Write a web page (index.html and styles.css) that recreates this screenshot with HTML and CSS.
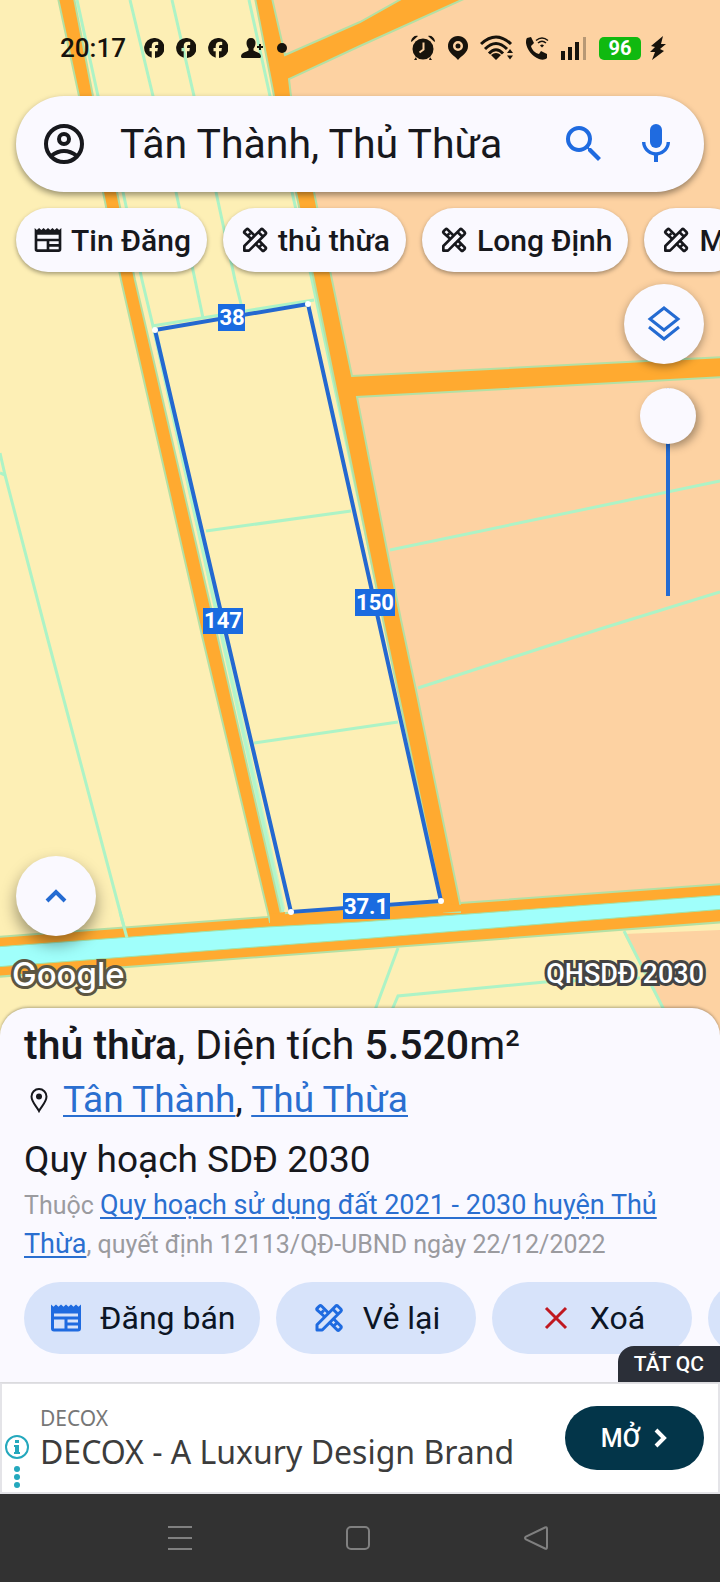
FILE: index.html
```html
<!DOCTYPE html>
<html lang="vi">

<head>
    <meta charset="UTF-8">
    <meta name="viewport" content="width=device-width, initial-scale=1.0">
    <title>Quy hoạch SDĐ 2030</title>
    <link rel="stylesheet" href="styles.css">
</head>

<body>
    <!-- shared icons -->
    <svg class="sprite" aria-hidden="true">
        <symbol id="i-news" viewBox="0 0 24 24">
            <path fill-rule="evenodd" d="M2 3l1.67 1.5L5.33 3 7 4.5 8.67 3l1.66 1.5L12 3l1.67 1.5L15.33 3 17 4.5 18.67 3l1.66 1.5L22 3v16a2 2 0 0 1-2 2H4a2 2 0 0 1-2-2zM4 13v6h7v-6zM13 17v2h7v-2zM13 13v2h7v-2zM4 9v2h16V9z" />
        </symbol>
        <symbol id="i-news-line" viewBox="0 0 24 24">
            <path fill-rule="evenodd" d="M2 3l1.67 1.5L5.33 3 7 4.5 8.67 3l1.66 1.5L12 3l1.67 1.5L15.33 3 17 4.5 18.67 3l1.66 1.5L22 3v16a2 2 0 0 1-2 2H4a2 2 0 0 1-2-2zM4 13v6h7v-6zM13 17v2h7v-2zM13 13v2h7v-2zM4 8v3h16V8z" />
        </symbol>
        <symbol id="i-design" viewBox="0 0 24 24">
            <g fill="none" stroke="currentColor" stroke-width="2" stroke-linejoin="round">
                <path d="M9.500 11.500L4.200 6.800a1 1 0 0 1 0-1.400L5.600 4a1 1 0 0 1 1.400 0l5 5M14.500 12l5.500 5.500a1 1 0 0 1 0 1.200L18.700 20a1 1 0 0 1-1.200 0L12 14.500M7 8.500L8.500 7M15.500 17l1.500-1.500" />
                <path d="M4 20v-3.500L16.500 4a1 1 0 0 1 1.300 0L20 6.200a1 1 0 0 1 0 1.300L7.500 20zM14.500 6l3.500 3.500" />
            </g>
        </symbol>
        <symbol id="i-fb" viewBox="0 0 20 20">
            <path d="M10 0a10 10 0 0 0-2.300 19.700v-6.400H5.500V10h2.200V8.400c0-3.300 1.500-4.700 4.600-4.700.6 0 1.500.1 1.900.2v3h-1.300c-1.400 0-1.900.5-1.900 1.800V10h2.900l-.5 3.300H11V20A10 10 0 0 0 10 0z" />
        </symbol>
    </svg>

    <main class="map">
        <svg class="map-canvas" viewBox="0 0 720 1036" preserveAspectRatio="xMidYMin slice" aria-hidden="true">
            <rect width="720" height="1040" fill="#fdefb5" />
            <!-- orange zone -->
            <path fill="#fdd2a2" d="M265 0H720V930L624 934 678 1040H720V890L455 910 330 290z" />
            <!-- parcel lines -->
            <g class="parcels">
                <path d="M0 453L5 475 48 640 127 938M0 473l5 2" />
                <path d="M77 0L98 96 123 192 142 280 153 326 283 912" />
                <path d="M130 0L153 96 176 192 194 275 203 318" />
                <path d="M172 0L194 96 216 192 235 280 242 308" />
                <path d="M249 0L270 96 292 192 312 280 445 908" />
                <path d="M152 326L314 300M206 531L351 511M254 743L398 722" />
                <path d="M390 550L720 481M418 688L600 629 720 592" />
                <path d="M398 948L375 1010M392 1010L398 996 545 982 640 978M624 931L664 1010" />
            </g>
            <path fill="none" stroke="#b3f7cf" stroke-width="5" opacity=".7" d="M156 335L283 910" />
            <!-- roads -->
            <g class="roads">
                <path d="M-5 937L267 917 286 913 443 902 460 903 725 884V922L-5 977z" />
                <path d="M58 -2H74L93 96 117 192 135 280 217 634 283 922H270L203 640 121 280 103 192 79 96z" />
                <path d="M255 -2H272L285 55 360 22 403 -2H466L360 46 289 79 291 96 314 192 332 280 352 376 725 357V377L357 397 387 550 401 620 416 690 460 903 460 912H444L383 620 314 280 296 192 274 96z" />
            </g>
            <path class="road-fill" d="M270 914L285 912 284 924 270 925zM440 903l23 2 0 6-23 2z" />
            <path fill="#a0fffb" stroke="#9fe3ab" stroke-width="1" d="M-5 947L267 927 360 922 725 895V909L360 939 -5 967z" />
            <path class="parcels" d="M120 912L127 938" />
            <!-- selected plot -->
            <path class="plot" d="M155 330L308 304 441 901 291 912z" />
            <g fill="#fff">
                <circle cx="155" cy="330" r="3" />
                <circle cx="308" cy="304" r="3" />
                <circle cx="441" cy="901" r="3" />
                <circle cx="291" cy="912" r="3" />
            </g>
            <g class="lengths">
                <rect x="218" y="304" width="27" height="27" /><text x="232" y="325">38</text>
                <rect x="203" y="608" width="40" height="26" /><text x="223" y="628">147</text>
                <rect x="355" y="589" width="40" height="27" /><text x="375" y="610">150</text>
                <rect x="343" y="893" width="47" height="26" /><text x="366" y="914">37.1</text>
            </g>
        </svg>

        <header class="status">
            <span class="clock">20:17</span>
            <svg width="20" height="20"><use href="#i-fb" /></svg>
            <svg width="20" height="20"><use href="#i-fb" /></svg>
            <svg width="20" height="20"><use href="#i-fb" /></svg>
            <svg width="24" height="20" viewBox="0 0 24 20">
                <path d="M11 0c3 0 4.500 2 4.500 5 0 2.500-1 4.500-2 5.500v2c2 1.500 7.500 2 7.500 6 0 1-1 1.500-2 1.500H3c-1 0-2-.5-2-1.500 0-4 5.500-4.500 7.500-6v-2c-1-1-2-3-2-5.500 0-3 1.500-5 4.500-5z" />
                <path d="M20 6v6M17 9h6" fill="none" stroke="currentColor" stroke-width="2" />
            </svg>
            <svg width="12" height="20"><circle cx="6" cy="10" r="5" /></svg>
            <div class="status-right">
                <svg width="26" height="26" viewBox="0 0 26 26">
                    <circle cx="13" cy="14" r="10.500" />
                    <path d="M1 6C2 2 5 0 8 1L1.500 7zM25 6c-1-4-4-6-7-5l6.500 6zM6 22l-2 3h3zM20 22l2 3h-3z" />
                    <path d="M13.500 7.500v7l-4 3" fill="none" stroke="#fdd2a2" stroke-width="2" />
                </svg>
                <svg width="22" height="26" viewBox="0 0 22 26">
                    <path fill-rule="evenodd" d="M11 1a10 10 0 0 1 10 10.500C21 18 14 21 11 25 8 21 1 18 1 11.500A10 10 0 0 1 11 1zm0 5a5 5 0 1 0 0 10 5 5 0 0 0 0-10z" />
                    <circle cx="11" cy="11" r="2.500" />
                </svg>
                <svg width="34" height="26" viewBox="0 0 34 26">
                    <g fill="none" stroke="currentColor" stroke-width="3">
                        <path d="M1 9Q16 -5 31 9M5 14Q16 3 27 14M9 18.500Q16 11 23 18.500" />
                    </g>
                    <path d="M11 20q5-4 10 0l-5 5zM27 18l3-4 3 4zM27 20.500h6l-3 4z" />
                </svg>
                <svg width="24" height="26" viewBox="0 0 24 26">
                    <path d="M2 3l4-1 3 6-3 3c1 4 4 7 8 8l2-3 6 3v4c-2 2-5 2-8 1C7 21 2 15 1 8c0-2 0-4 1-5z" />
                    <path d="M11 5.500q6-5 12 0M13 8q4-3.500 8 0" fill="none" stroke="currentColor" stroke-width="1.500" />
                    <path d="M15 10.500q2-2 4 0l-2 2z" />
                </svg>
                <svg width="28" height="26" viewBox="0 0 28 26">
                    <path d="M1 16h4v9H1zM8 12h4v13H8zM15 7h4v18h-4z" />
                    <path d="M23 2h3v23h-3z" opacity=".3" />
                </svg>
                <span class="battery">96</span>
                <svg width="16" height="24" viewBox="0 0 16 24">
                    <path d="M13 0L1 10l4 1-5 5 5 0-3 8 12-9-4-2 6-5-5 0z" />
                </svg>
            </div>
        </header>

        <form class="search">
            <button type="button" class="icon-btn" aria-label="Tài khoản">
                <svg width="48" height="48" viewBox="0 0 24 24">
                    <g fill="none" stroke="currentColor" stroke-width="2">
                        <circle cx="12" cy="12" r="9" />
                        <circle cx="12" cy="9.500" r="2.500" />
                        <path d="M5.500 18q6.500-5 13 0" />
                    </g>
                </svg>
            </button>
            <input class="search-input" type="text" aria-label="Tìm kiếm" value="Tân Thành, Thủ Thừa">
            <button type="submit" class="icon-btn blue" aria-label="Tìm">
                <svg width="48" height="48" viewBox="0 0 24 24">
                    <path d="M15.500 14h-.79l-.28-.27A6.470 6.470 0 0 0 16 9.500 6.500 6.500 0 1 0 9.500 16c1.610 0 3.090-.59 4.230-1.570l.27.28v.79l5 4.990L20.490 19l-4.990-5zm-6 0C7.010 14 5 11.990 5 9.500S7.010 5 9.500 5 14 7.010 14 9.500 11.990 14 9.500 14z" />
                </svg>
            </button>
            <button type="button" class="icon-btn blue" aria-label="Giọng nói">
                <svg width="48" height="48" viewBox="0 0 24 24">
                    <rect x="9" y="2" width="6" height="12" rx="3" />
                    <path d="M17.300 11c0 3-2.540 5.100-5.300 5.100S6.700 14 6.700 11H5c0 3.410 2.720 6.230 6 6.720V21h2v-3.280c3.280-.48 6-3.300 6-6.720h-1.700z" />
                </svg>
            </button>
        </form>

        <nav class="chips">
            <button class="chip"><svg width="32" height="32"><use href="#i-news-line" /></svg>Tin Đăng</button>
            <button class="chip"><svg width="32" height="32"><use href="#i-design" /></svg>thủ thừa</button>
            <button class="chip"><svg width="32" height="32"><use href="#i-design" /></svg>Long Định</button>
            <button class="chip"><svg width="32" height="32"><use href="#i-design" /></svg>M</button>
        </nav>

        <div class="tools">
            <button class="fab" aria-label="Lớp bản đồ">
                <svg width="36" height="36" viewBox="0 0 36 36">
                    <path d="M18 2L32 13 18 24 4 13zM3 21l15 12 15-12" fill="none" stroke="currentColor" stroke-width="3" />
                </svg>
            </button>
            <input class="opacity" type="range" min="0" max="100" value="0" aria-label="Độ mờ">
        </div>

        <div class="map-foot">
            <button class="fab fab-up" aria-label="Mở rộng">
                <svg width="24" height="24" viewBox="0 0 24 24">
                    <path d="M3 17l9-9 9 9" fill="none" stroke="currentColor" stroke-width="4" />
                </svg>
            </button>
            <div class="credits">
                <span class="google">Google</span>
                <span class="layer-name">QHSDĐ 2030</span>
            </div>
        </div>
    </main>

    <section class="sheet">
        <h1 class="title"><b>thủ thừa</b>, Diện tích <b>5.520</b>m²</h1>
        <p class="place">
            <svg width="30" height="30" viewBox="0 0 30 30">
                <path d="M15 4a7.500 7.500 0 0 1 7.500 7.500C22.500 17 17 22 15 26c-2-4-7.500-9-7.500-14.500A7.500 7.500 0 0 1 15 4z" fill="none" stroke="currentColor" stroke-width="2" />
                <circle cx="15" cy="11.500" r="3" />
            </svg>
            <span><a href="#">Tân Thành</a>, <a href="#">Thủ Thừa</a></span>
        </p>
        <h2 class="plan">Quy hoạch SDĐ 2030</h2>
        <p class="note">Thuộc <a href="#">Quy hoạch sử dụng đất 2021 - 2030 huyện Thủ Thừa</a>, quyết định 12113/QĐ-UBND ngày 22/12/2022</p>
        <div class="actions">
            <button class="action"><svg class="blue" width="36" height="36"><use href="#i-news" /></svg>Đăng bán</button>
            <button class="action"><svg class="blue" width="36" height="36"><use href="#i-design" /></svg>Vẻ lại</button>
            <button class="action">
                <svg class="red" width="36" height="36" viewBox="0 0 36 36">
                    <path d="M8 8l20 20M28 8L8 28" fill="none" stroke="currentColor" stroke-width="3" />
                </svg>Xoá
            </button>
            <button class="action" aria-label="Khác"></button>
        </div>
        <button class="hide-ad">TẮT QC</button>
    </section>

    <aside class="ad">
        <div class="ad-marks">
            <svg width="24" height="58" viewBox="0 0 24 58">
                <circle cx="12" cy="13" r="11" fill="none" stroke="currentColor" stroke-width="2" />
                <path d="M10 6h4v3h-4zM9 11h5v7h1v2H9v-2h1v-5H9z" />
                <circle cx="12" cy="35" r="3" />
                <circle cx="12" cy="43" r="3" />
                <circle cx="12" cy="51" r="3" />
            </svg>
        </div>
        <div class="ad-text">
            <span class="ad-brand">DECOX</span>
            <span class="ad-title">DECOX - A Luxury Design Brand</span>
        </div>
        <button class="ad-open">MỞ
            <svg width="14" height="20" viewBox="0 0 14 20">
                <path d="M2 2l8 8-8 8" fill="none" stroke="currentColor" stroke-width="4" />
            </svg>
        </button>
    </aside>

    <footer class="navbar">
        <button aria-label="Gần đây">
            <svg width="26" height="26" viewBox="0 0 26 26"><path d="M1 2h24M1 13h24M1 24h24" /></svg>
        </button>
        <button aria-label="Trang chủ">
            <svg width="26" height="26" viewBox="0 0 26 26"><rect x="2" y="2" width="22" height="22" rx="4" /></svg>
        </button>
        <button aria-label="Quay lại">
            <svg width="26" height="26" viewBox="0 0 26 26"><path d="M22 2.500Q24 1.500 24 4v18q0 2.500-2 1.500L3 14.500Q1 13 3 11.500z" /></svg>
        </button>
    </footer>
</body>

</html>
```

FILE: styles.css
```css
* {
    box-sizing: border-box;
}

body {
    margin: 0;
    min-height: 100vh;
    display: flex;
    flex-direction: column;
    overflow-x: hidden;
    font-family: Roboto, "Noto Sans", sans-serif;
    color: #17181d;
    background: #323232;
}

button {
    border: none;
    padding: 0;
    font-family: inherit;
    color: inherit;
    background: none;
    cursor: pointer;
}

svg {
    display: block;
    flex: none;
    fill: currentColor;
}

a {
    color: #2a6fd0;
    text-decoration-thickness: 2px;
    text-underline-offset: 3px;
}

.sprite {
    position: absolute;
    width: 0;
    height: 0;
}

.blue {
    color: #1f6be0;
}

.red {
    color: #c01820;
}

/* map */
.map {
    position: relative;
    flex: 1;
    display: flex;
    flex-direction: column;
}

.map-canvas {
    position: absolute;
    top: 0;
    left: 0;
    width: 100%;
    height: 100%;
    z-index: -1;
}

.parcels {
    fill: none;
    stroke: #adf3c6;
    stroke-width: 3;
}

.roads {
    fill: #ffaa30;
    stroke: #b4e0a4;
    stroke-width: 2;
}

.road-fill {
    fill: #ffaa30;
}

.plot {
    fill: none;
    stroke: #2468d0;
    stroke-width: 4;
}

.lengths rect {
    fill: #1a6be0;
}

.lengths text {
    fill: #fff;
    font-size: 22px;
    font-weight: 700;
    text-anchor: middle;
}

/* status bar */
.status {
    display: flex;
    align-items: center;
    gap: 12px;
    height: 96px;
    padding: 0 54px 0 60px;
    color: #17130c;
}

.clock {
    margin-right: 6px;
    font-size: 26px;
    font-weight: 500;
}

.status-right {
    display: flex;
    align-items: center;
    gap: 11px;
    margin-left: auto;
}

.battery {
    width: 42px;
    margin-right: -2px;
    border-radius: 5px;
    background: #10b910;
    color: #fff;
    font-size: 20px;
    font-weight: 700;
    line-height: 23px;
    text-align: center;
}

/* search */
.search {
    display: flex;
    align-items: center;
    gap: 24px;
    height: 96px;
    margin: 0 16px;
    padding: 0 24px;
    border-radius: 48px;
    background: #faf9ff;
    box-shadow: 0 3px 6px rgba(0, 0, 0, 0.4);
}

.search-input {
    flex: 1;
    min-width: 0;
    padding: 0 8px;
    border: none;
    outline: none;
    background: none;
    font-family: inherit;
    font-size: 41px;
    color: inherit;
}

/* chips */
.chips {
    display: flex;
    gap: 16px;
    padding: 16px 16px 12px;
    overflow: hidden;
}

.chip {
    flex: none;
    display: flex;
    align-items: center;
    gap: 7px;
    height: 64px;
    padding: 0 16px;
    border-radius: 32px;
    background: #faf9ff;
    box-shadow: 0 2px 4px rgba(0, 0, 0, 0.35);
    font-size: 30px;
    font-weight: 500;
    white-space: nowrap;
}

/* floating tools */
.tools {
    display: flex;
    flex-direction: column;
    align-items: flex-end;
    gap: 24px;
    padding-right: 16px;
}

.fab {
    display: flex;
    align-items: center;
    justify-content: center;
    width: 80px;
    height: 80px;
    border-radius: 50%;
    background: #faf9ff;
    box-shadow: 0 3px 8px rgba(0, 0, 0, 0.35);
    color: #246bd2;
}

.opacity {
    appearance: none;
    writing-mode: vertical-lr;
    width: 56px;
    height: 208px;
    margin: 0 8px 0 0;
    background: linear-gradient(#246bd2, #246bd2) center / 4px 100% no-repeat;
}

.opacity::-webkit-slider-thumb {
    appearance: none;
    width: 56px;
    height: 56px;
    border-radius: 50%;
    background: #faf9ff;
    box-shadow: 3px 3px 8px rgba(0, 0, 0, 0.35);
}

.map-foot {
    margin-top: auto;
    padding: 0 16px 40px 12px;
}

.fab-up {
    margin-left: 4px;
    box-shadow: 0 8px 16px rgba(0, 0, 0, 0.4);
}

.credits {
    display: flex;
    align-items: center;
    justify-content: space-between;
    margin-top: 16px;
    line-height: 44px;
    color: #fff;
    paint-order: stroke;
    -webkit-text-stroke: 6px #444;
}

.google {
    font-family: Inter, sans-serif;
    font-size: 33px;
    font-weight: 500;
    -webkit-text-stroke-color: #5c5642;
}

.layer-name {
    font-size: 27px;
    font-weight: 500;
}

/* bottom sheet */
.sheet {
    position: relative;
    margin-top: -28px;
    padding: 12px 24px 28px;
    border-radius: 28px 28px 0 0;
    background: #faf9ff;
    box-shadow: 0 -1px 3px rgba(0, 0, 0, 0.3);
    overflow: hidden;
}

.title,
.plan,
.place,
.note {
    margin: 0;
    font-weight: 400;
}

.title {
    font-size: 41px;
    line-height: 50px;
}

.title b {
    font-weight: 500;
}

.place {
    display: flex;
    align-items: center;
    gap: 9px;
    margin-top: 5px;
    font-size: 37px;
    line-height: 50px;
}

.plan {
    margin-top: 10px;
    font-size: 37px;
    line-height: 50px;
}

.note {
    margin-top: 1px;
    font-size: 25px;
    line-height: 38px;
    color: #9b9b9f;
}

.note a {
    font-size: 27px;
}

.actions {
    display: flex;
    gap: 16px;
    margin: 18px -24px 0 0;
    overflow: hidden;
}

.action {
    flex: none;
    display: flex;
    align-items: center;
    justify-content: center;
    gap: 16px;
    min-width: 200px;
    height: 72px;
    padding: 0 24px;
    border-radius: 36px;
    background: #d7e3fa;
    font-size: 32px;
    color: #0c1525;
}

.hide-ad {
    position: absolute;
    right: 0;
    bottom: 0;
    height: 36px;
    padding: 0 16px;
    border-radius: 16px 0 0 0;
    background: #2b2f38;
    color: #fff;
    font-size: 21px;
    font-weight: 500;
}

/* ad banner */
.ad {
    display: flex;
    align-items: center;
    height: 112px;
    padding-right: 14px;
    border: 2px solid #e4e4e8;
    background: #fff;
}

.ad-marks {
    align-self: flex-end;
    width: 38px;
    padding-left: 3px;
    color: #24a8bd;
}

.ad-text {
    flex: 1;
    display: flex;
    flex-direction: column;
    font-family: "Noto Sans", sans-serif;
}

.ad-brand {
    font-size: 21px;
    line-height: 28px;
    color: #777;
}

.ad-title {
    font-size: 32px;
    line-height: 40px;
    color: #3c3c3c;
}

.ad-open {
    display: flex;
    align-items: center;
    justify-content: center;
    gap: 14px;
    width: 139px;
    height: 64px;
    border-radius: 32px;
    background: #033549;
    color: #fff;
    font-size: 25px;
    font-weight: 500;
}

/* system navigation */
.navbar {
    display: flex;
    align-items: center;
    justify-content: center;
    gap: 152px;
    height: 88px;
    padding-right: 4px;
    background: #323232;
    color: #808080;
}

.navbar svg {
    fill: none;
    stroke: currentColor;
    stroke-width: 2;
}
```
